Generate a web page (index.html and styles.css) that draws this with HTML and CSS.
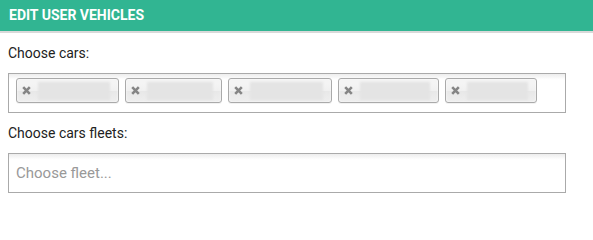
FILE: index.html
```html
<!DOCTYPE html>
<html>
<head>
<meta charset="utf-8">
<link rel="stylesheet" href="styles.css">
</head>
<body>
<div class="panel">
  <div class="panel-header">Edit user vehicles</div>
  <div class="panel-body">
    <label class="field-label">Choose cars:</label>
    <ul class="choices">
      <li class="chip"><svg class="chip-close" viewBox="0 0 9 9"><path d="M1.2 1.2L7.8 7.8M7.8 1.2L1.2 7.8"/></svg><span class="redacted" style="width:72px"></span></li>
      <li class="chip"><svg class="chip-close" viewBox="0 0 9 9"><path d="M1.2 1.2L7.8 7.8M7.8 1.2L1.2 7.8"/></svg><span class="redacted" style="width:66px"></span></li>
      <li class="chip"><svg class="chip-close" viewBox="0 0 9 9"><path d="M1.2 1.2L7.8 7.8M7.8 1.2L1.2 7.8"/></svg><span class="redacted" style="width:73px"></span></li>
      <li class="chip"><svg class="chip-close" viewBox="0 0 9 9"><path d="M1.2 1.2L7.8 7.8M7.8 1.2L1.2 7.8"/></svg><span class="redacted" style="width:70px"></span></li>
      <li class="chip"><svg class="chip-close" viewBox="0 0 9 9"><path d="M1.2 1.2L7.8 7.8M7.8 1.2L1.2 7.8"/></svg><span class="redacted" style="width:61px"></span></li>
    </ul>
    <label class="field-label second">Choose cars fleets:</label>
    <div class="choices single">
      <span class="placeholder">Choose fleet...</span>
    </div>
  </div>
</div>
</body>
</html>
```

FILE: styles.css
```css
* { box-sizing: border-box; }
html, body { margin: 0; padding: 0; background: #fff; }
body { font-family: Roboto, "Liberation Sans", Arial, sans-serif; color: #333; }

.panel-header {
  height: 33px;
  background: #31b592;
  border-bottom: 2px solid #d9d9d9;
  color: #fff;
  font-weight: bold;
  font-size: 14px;
  text-transform: uppercase;
  padding: 9px 0 0 9px;
  line-height: 13px;
}

.panel-body {
  padding: 12px 27px 0 8px;
}

.field-label {
  display: block;
  font-size: 14px;
  line-height: 16px;
  color: #222;
  margin-bottom: 12px;
}
.field-label.second { margin-top: 12px; }

.choices {
  list-style: none;
  margin: 0;
  height: 40px;
  border: 1px solid #aaa;
  background: linear-gradient(#eee 1%, #fff 15%);
  display: flex;
  align-items: flex-start;
  gap: 6px;
  padding: 4px 7px 0;
}

.chip {
  height: 25px;
  display: flex;
  align-items: center;
  padding: 0 8px 0 5px;
  border: 1px solid #aaa;
  border-radius: 3px;
  background: linear-gradient(#f4f4f4 20%, #f0f0f0 50%, #e8e8e8 52%, #eee 100%);
  box-shadow: 0 0 2px #fff inset, 0 1px 0 rgba(0,0,0,.05);
}

.chip-close {
  width: 9px;
  height: 9px;
  margin-right: 7px;
  stroke: #858585;
  stroke-width: 2.6;
  fill: none;
}

.redacted {
  display: block;
  height: 18px;
  background: #e4e4e4;
  filter: blur(1px);
}

.single {
  height: 40px;
  align-items: center;
  padding: 0 7px;
}

.placeholder {
  font-size: 15px;
  color: #999;
}
```
